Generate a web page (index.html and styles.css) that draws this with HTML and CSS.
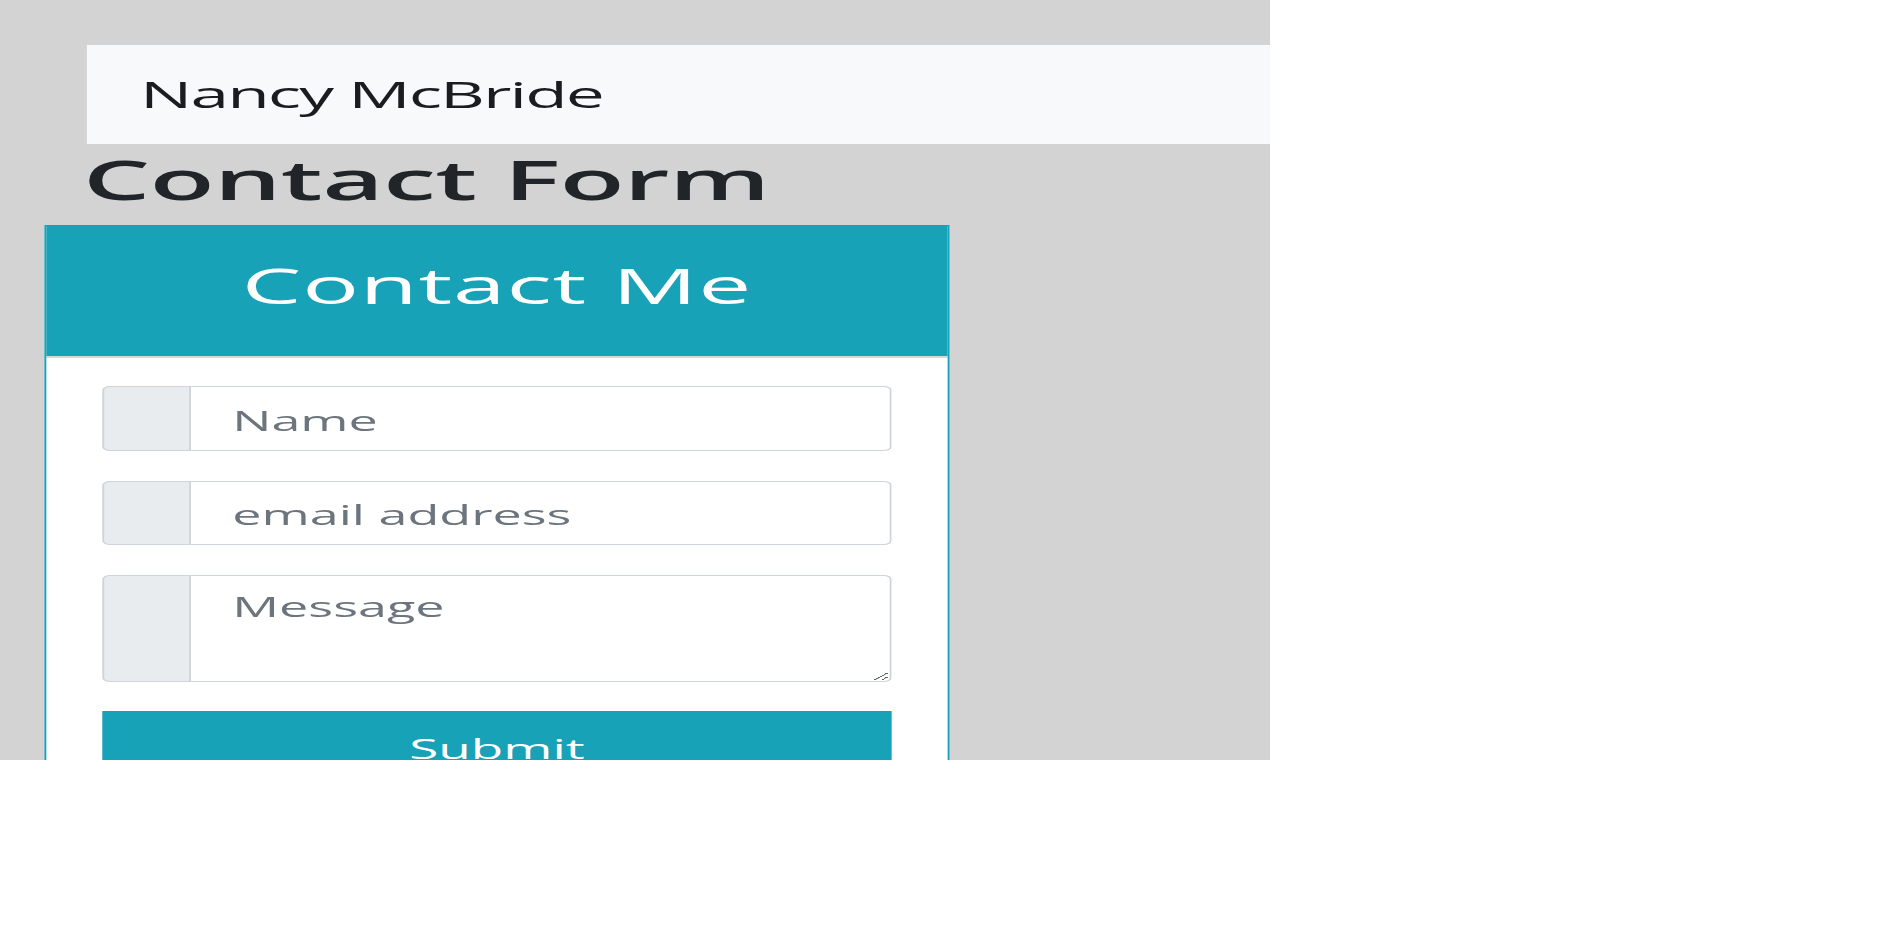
FILE: index.html
```html
<!DOCTYPE html>
<html lang="en">
<head>
<meta charset="utf-8">
<title>Contact Form</title>
<link rel="stylesheet" href="styles.css">
</head>
<body>
<div class="frame">
  <div class="stage">
    <nav class="navbar"><span class="brand">Nancy McBride</span></nav>
    <h1 class="title">Contact Form</h1>
    <div class="card">
      <div class="card-header">Contact Me</div>
      <form class="card-body">
        <div class="group g1"><span class="addon"></span><input class="field" type="text" placeholder="Name"></div>
        <div class="group g2"><span class="addon"></span><input class="field" type="email" placeholder="email address"></div>
        <div class="group g3"><span class="addon"></span><textarea class="field area" placeholder="Message"></textarea></div>
        <button class="submit" type="button">Submit</button>
      </form>
    </div>
  </div>
</div>
</body>
</html>
```

FILE: styles.css
```css
html, body {
  margin: 0;
  padding: 0;
  background: #ffffff;
}

.frame {
  width: 1270px;
  height: 760px;
  overflow: hidden;
  background: #d3d3d3;
}

.stage {
  width: 658px;
  padding-top: 45px;
  transform: scaleX(1.93);
  transform-origin: 0 0;
  font-family: "Open Sans", "Liberation Sans", sans-serif;
  color: #212529;
}

.navbar {
  margin-left: 44.6px;
  height: 99px;
  background: #f8f9fa;
  padding-left: 28px;
  box-sizing: border-box;
}

.brand {
  font-size: 36px;
  line-height: 99px;
  letter-spacing: -1px;
  color: #1a1d20;
  white-space: nowrap;
}

.title {
  margin: 0 0 12px 43px;
  font-size: 55px;
  font-weight: 600;
  line-height: 69px;
  letter-spacing: -0.3px;
  white-space: nowrap;
}

.card {
  margin-left: 22.8px;
  width: 469.4px;
  box-sizing: border-box;
  border: 1px solid #17a2b8;
  background: #ffffff;
}

.card-header {
  background: #17a2b8;
  color: #ffffff;
  text-align: center;
  font-size: 49px;
  font-weight: 500;
  line-height: 67px;
  letter-spacing: 0.4px;
  padding: 25.5px 0 37.5px;
  border-bottom: 2px solid #d6d8d9;
  white-space: nowrap;
}

.card-body {
  margin: 0;
  padding: 28px 29px 30px;
  display: flex;
  flex-direction: column;
}

.group {
  display: flex;
}

.g1 { height: 65px; margin-bottom: 30px; }
.g2 { height: 64px; margin-bottom: 30px; }
.g3 { height: 107px; margin-bottom: 29px; }

.addon {
  width: 46px;
  flex: none;
  box-sizing: border-box;
  background: #e9ecef;
  border: 1px solid #ced4da;
  border-radius: 4px 0 0 4px;
}

.field {
  flex: 1;
  min-width: 0;
  margin: 0;
  box-sizing: border-box;
  height: 100%;
  border: 1px solid #ced4da;
  border-left: none;
  border-radius: 0 4px 4px 0;
  padding: 3px 10px 0 21.5px;
  font-family: "Open Sans", "Liberation Sans", sans-serif;
  font-size: 27px;
  color: #495057;
  background: #ffffff;
  outline: none;
}

.area {
  padding-top: 11px;
  line-height: 1.5;
  resize: vertical;
}

.field::placeholder {
  color: #6c757d;
  opacity: 1;
}

.submit {
  margin: 0;
  border: none;
  border-radius: 0;
  background: #17a2b8;
  color: #ffffff;
  font-family: "Open Sans", "Liberation Sans", sans-serif;
  font-size: 27.5px;
  line-height: 40.5px;
  padding: 18px 0 10px;
  text-align: center;
}
```
